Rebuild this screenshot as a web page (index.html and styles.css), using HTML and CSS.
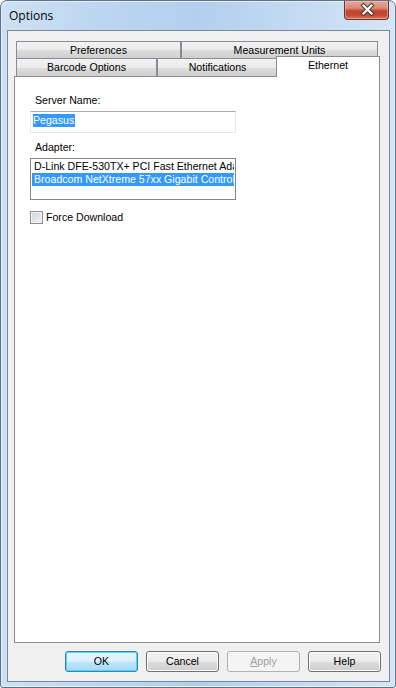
FILE: index.html
```html
<!DOCTYPE html>
<html>
<head>
    <title>Options</title>
    <link rel="stylesheet" href="styles.css">
</head>
<body>
    <div class="window">
        <div class="titlebar">
            <span class="title">Options</span>
            <div class="close">
                <svg width="45" height="20" viewBox="0 0 45 20">
                    <path d="M19.5 5.5 L27.5 13.5 M27.5 5.5 L19.5 13.5" stroke="#3c3c3c" stroke-width="4.2" stroke-linecap="square" fill="none"/>
                    <path d="M19.5 5.5 L27.5 13.5 M27.5 5.5 L19.5 13.5" stroke="#ffffff" stroke-width="2.2" stroke-linecap="square" fill="none"/>
                </svg>
            </div>
        </div>

        <div class="client">
            <div class="tabctl">
                <div class="tabrow back">
                    <div class="tab t-pref">Preferences</div>
                    <div class="tab t-units">Measurement Units</div>
                </div>
                <div class="tabrow front">
                    <div class="tab t-barcode">Barcode Options</div>
                    <div class="tab t-notif">Notifications</div>
                    <div class="tab t-eth selected">Ethernet</div>
                </div>
                <div class="panel">
                    <div class="label">Server Name:</div>
                    <div class="textbox"><span class="sel">Pegasus</span></div>

                    <div class="label label2">Adapter:</div>
                    <div class="listbox">
                        <div class="item">D-Link DFE-530TX+ PCI Fast Ethernet Ada</div>
                        <div class="item selitem">Broadcom NetXtreme 57xx Gigabit Controlle</div>
                    </div>

                    <label class="check"><span class="box"></span>Force Download</label>
                </div>
            </div>

            <div class="buttons">
                <div class="btn default">OK</div>
                <div class="btn">Cancel</div>
                <div class="btn disabled"><u>A</u>pply</div>
                <div class="btn">Help</div>
            </div>
        </div>
    </div>
</body>
</html>
```

FILE: styles.css
```css
html, body {margin:0;padding:0;}
body {width:396px;height:688px;overflow:hidden;background:#fff;font-family:"Liberation Sans",Arial,sans-serif;font-size:10.6px;color:#000;}

/* Window frame */
.window {box-sizing:border-box;width:396px;height:688px;border:1px solid #5d7189;border-radius:7px 7px 3px 3px;padding:0 5px 5px 6px;display:flex;flex-direction:column;
    background:linear-gradient(90deg,#cfe1f4 0%,#bcd6f0 25%,#b3cfed 50%,#c3daf2 75%,#d4e5f6 100%);
    box-shadow:inset 1px 1px 0 #e6f0fa, inset -1px -1px 0 #e6f0fa;}
.titlebar {height:29px;display:flex;align-items:flex-start;justify-content:space-between;}
.title {font-family:"Open Sans","Liberation Sans",sans-serif;font-size:12px;line-height:16px;padding:7px 0 0 2px;color:#000;}
.close {width:45px;height:19px;margin-right:1px;box-sizing:border-box;border:1px solid #6e3129;border-top:none;border-radius:0 0 4px 4px;
    background:linear-gradient(#e9a596 0%,#d98a77 40%,#c4432c 55%,#c84a33 80%,#d87a5e 100%);
    box-shadow:inset 0 0 0 1px rgba(255,210,200,0.45);}
.close svg {display:block;margin:-1px 0 0 -1px;}

/* Client area */
.client {flex:1;display:flex;flex-direction:column;border:1px solid #7c8893;background:#f0f0f0;}
.tabctl {flex:1;display:flex;flex-direction:column;margin:10px 9px 0 6px;}
.tabrow {display:flex;padding:0 2px;}
.tab {box-sizing:border-box;border:1px solid #898c95;border-bottom:none;text-align:center;white-space:nowrap;
    background:linear-gradient(#f2f2f2 0%,#ebebeb 50%,#dddddd 51%,#cfcfcf 100%);}
.back .tab {height:17px;line-height:16px;}
.front .tab {height:18px;line-height:17px;}
.t-pref {width:165px;}
.t-units {width:197px;}
.t-barcode {width:141px;}
.t-notif {width:121px;}
.t-eth {width:100px;}
.tab.selected {position:relative;z-index:1;width:104px;height:21px;margin:-2px -2px -1px -2px;background:#fff;line-height:17px;}

.panel {flex:1;border:1px solid #898c95;background:#fff;padding:17px 0 0 15px;}
.label {line-height:13px;padding-left:5px;}
.label2 {margin-top:8px;}
.textbox {box-sizing:border-box;width:206px;height:22px;margin-top:4px;border:1px solid #e3e9ef;border-top-color:#abadb3;padding:2px 0 0 2px;}
.sel {display:inline-block;background:#3399ff;color:#fff;line-height:13px;padding:0 1px 0 0;}
.listbox {box-sizing:border-box;width:206px;height:42px;margin-top:4px;border:1px solid #828790;padding:1px 1px 0 1px;overflow:hidden;}
.item {white-space:nowrap;overflow:hidden;line-height:13px;padding-left:2px;}
.selitem {background:#3399ff;color:#fff;}
.check {display:flex;align-items:center;margin-top:11px;line-height:13px;}
.box {box-sizing:border-box;width:13px;height:13px;margin-right:3px;border:1px solid #8e8f8f;
    background:linear-gradient(135deg,#d0d3d8 0%,#f4f4f4 100%);box-shadow:inset 0 0 0 1px #f4f4f4;}

/* Buttons */
.buttons {display:flex;justify-content:flex-end;gap:8px;padding:8px 8px 9px 0;}
.btn {box-sizing:border-box;width:73px;height:21px;line-height:19px;text-align:center;border:1px solid #707070;border-radius:3px;
    background:linear-gradient(#f2f2f2 0%,#ebebeb 50%,#dddddd 51%,#cfcfcf 100%);box-shadow:inset 0 0 0 1px #fcfcfc;}
.btn.default {border-color:#3c7fb1;background:linear-gradient(#eaf6fd 0%,#d9f0fc 50%,#bee6fd 51%,#a7d9f5 100%);box-shadow:inset 0 0 0 1px #48d8fb;}
.btn.disabled {color:#a0a0a0;border-color:#adb2b5;background:#f4f4f4;box-shadow:none;}
.btn.disabled u {text-decoration:underline;}
```
